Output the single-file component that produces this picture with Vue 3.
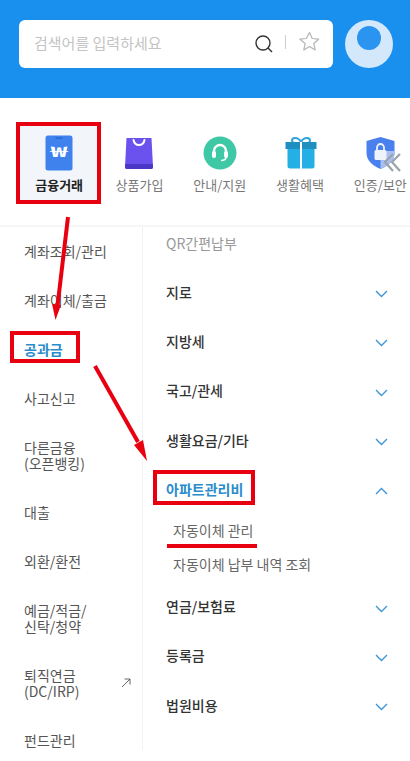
<script setup>
import { ref } from 'vue';

const categories = ref([
  { id: 'finance', label: '금융거래', active: true },
  { id: 'product', label: '상품가입' },
  { id: 'support', label: '안내/지원' },
  { id: 'benefit', label: '생활혜택' },
  { id: 'auth', label: '인증/보안' }
]);

const sideMenu = ref([
  { label: ['계좌조회/관리'] },
  { label: ['계좌이체/출금'] },
  { label: ['공과금'], active: true },
  { label: ['사고신고'] },
  { label: ['다른금융', '(오픈뱅킹)'] },
  { label: ['대출'] },
  { label: ['외환/환전'] },
  { label: ['예금/적금/', '신탁/청약'] },
  { label: ['퇴직연금', '(DC/IRP)'], external: true },
  { label: ['펀드관리'] }
]);

const subMenu = ref([
  { label: '지로' },
  { label: '지방세' },
  { label: '국고/관세' },
  { label: '생활요금/기타' },
  { label: '아파트관리비', open: true, children: ['자동이체 관리', '자동이체 납부 내역 조회'] },
  { label: '연금/보험료' },
  { label: '등록금' },
  { label: '법원비용' }
]);
</script>

<template>
  <div class="page">
    <header class="top">
      <div class="search">
        <span class="placeholder">검색어를 입력하세요</span>
        <svg class="search-icon" width="20" height="20" viewBox="0 0 20 20" fill="none">
          <circle cx="9" cy="9" r="7" stroke="#333" stroke-width="1.4" />
          <path d="M14 14l4 4" stroke="#333" stroke-width="1.4" />
        </svg>
        <span class="sep"></span>
        <svg class="star-icon" width="21" height="21" viewBox="0 0 21 21" fill="none">
          <path d="M10.5 1.5l2.7 6 6.4.7-4.8 4.3 1.4 6.4-5.7-3.3-5.7 3.3 1.4-6.4L.9 8.2l6.4-.7z" stroke="#b5b5b5" stroke-width="1.2" stroke-linejoin="round" />
        </svg>
      </div>
      <div class="avatar"><span class="avatar-dot"></span></div>
    </header>

    <nav class="categories">
      <div v-for="cat in categories" :key="cat.id" class="cat" :class="{ active: cat.active }">
        <div class="cat-icon">
          <svg v-if="cat.id === 'finance'" width="28" height="36" viewBox="0 0 28 36">
            <rect x="0.5" y="0.5" width="27" height="35" rx="2.5" fill="#3f82ee" />
            <rect x="10.5" y="2.5" width="7" height="1.2" fill="#2a62c4" />
            <text x="14" y="21.5" text-anchor="middle" class="won" textLength="17" lengthAdjust="spacingAndGlyphs">₩</text>
          </svg>
          <svg v-else-if="cat.id === 'product'" width="28" height="31" viewBox="0 0 28 31">
            <path d="M1.5 0h25L28 29q0 2-2 2H2q-2 0-2-2z" fill="#6b52ee" />
            <path d="M.2 26h27.6l.2 3q0 2-2 2H2q-2 0-2-2z" fill="#4c38c6" />
            <path d="M8.5 2q1 5 5.5 5t5.5-5" fill="none" stroke="#fff" stroke-width="2" stroke-linecap="round" />
          </svg>
          <svg v-else-if="cat.id === 'support'" width="34" height="34" viewBox="0 0 34 34">
            <circle cx="17" cy="17" r="16.5" fill="#3fc8a6" />
            <path d="M11 20v-5a6 6 0 0112 0v5" fill="none" stroke="#fff" stroke-width="2.4" />
            <rect x="9" y="15" width="4" height="7" rx="2" fill="#fff" />
            <rect x="21" y="15" width="4" height="7" rx="2" fill="#fff" />
            <path d="M23 21q0 3.5-5 3.5" fill="none" stroke="#fff" stroke-width="1.6" />
          </svg>
          <svg v-else-if="cat.id === 'benefit'" class="gift" width="32" height="32" viewBox="0 0 32 32">
            <path d="M16 5q-2-4-6-4-3 0-3 2.5T11 6M16 5q2-4 6-4 3 0 3 2.5T21 6" fill="none" stroke="#2fa4dc" stroke-width="2" />
            <rect x="0.5" y="5" width="31" height="7" fill="#1f8fc0" />
            <path d="M2.5 12h27v17q0 2.5-2.5 2.5H5q-2.5 0-2.5-2.5z" fill="#24b0e4" />
            <rect x="15" y="5" width="2" height="27" fill="#fff" />
          </svg>
          <svg v-else width="29" height="32" viewBox="0 0 29 32">
            <path d="M14.5 0L28.5 4v12q0 10-14 16Q.5 26 .5 16V4z" fill="#4a7fee" />
            <path d="M14.5 14h14v2q0 10-14 16z" fill="#a8bff2" />
            <rect x="8.5" y="13" width="12" height="10" rx="1.5" fill="#eef2fb" />
            <path d="M11 13v-2.5a3.5 3.5 0 017 0V13" fill="none" stroke="#eef2fb" stroke-width="1.8" />
          </svg>
        </div>
        <span class="cat-label">{{ cat.label }}</span>
      </div>
    </nav>

    <div class="menu">
      <ul class="side">
        <li v-for="item in sideMenu" :key="item.label[0]" class="side-item" :class="{ active: item.active }">
          <span class="side-text">
            <span v-for="line in item.label" :key="line" class="line">{{ line }}</span>
          </span>
          <svg v-if="item.external" class="ext" width="10" height="10" viewBox="0 0 10 10" fill="none">
            <path d="M1 9L9 1M3.5 1H9v5.5" stroke="#555" stroke-width="0.9" />
          </svg>
        </li>
      </ul>

      <div class="sub">
        <div class="sub-hint">QR간편납부</div>
        <div v-for="item in subMenu" :key="item.label" class="group">
          <div class="sub-row" :class="{ open: item.open }">
            <span>{{ item.label }}</span>
            <svg width="13" height="8" viewBox="0 0 13 8" fill="none" class="chev">
              <path d="M1 1l5.5 5.5L12 1" stroke="#3d96d8" stroke-width="1.4" />
            </svg>
          </div>
          <ul v-if="item.children" class="children">
            <li v-for="child in item.children" :key="child">{{ child }}</li>
          </ul>
        </div>
      </div>
    </div>

    <!-- 빨간 안내 표시 -->
    <svg class="marks" width="410" height="761" viewBox="0 0 410 761" fill="none">
      <path d="M393 154l-8 8 8 9M400 154l-8 8 8 9" stroke="#9aa2aa" stroke-width="2.2" />
      <rect x="18" y="124" width="81" height="78" stroke="#e90010" stroke-width="4" />
      <rect x="12" y="333" width="66" height="28" stroke="#e90010" stroke-width="4" />
      <rect x="155" y="472" width="98" height="31" stroke="#e90010" stroke-width="4" />
      <path d="M167 546h90" stroke="#e90010" stroke-width="4" />
      <path d="M68 217L57.5 306" stroke="#e90010" stroke-width="4" />
      <path d="M52 304l9 1-5.5 15z" fill="#e90010" />
      <path d="M95 366l43 76" stroke="#e90010" stroke-width="4" />
      <path d="M134 445l9-5 4 21z" fill="#e90010" />
    </svg>
  </div>
</template>

<style scoped>
.page {
  position: relative;
  width: 410px;
  height: 761px;
  overflow: hidden;
  background: #fff;
  font-family: "Noto Sans CJK KR", "Noto Sans", sans-serif;
}

.top {
  display: flex;
  gap: 12px;
  height: 98px;
  padding: 20px 17px 0 19px;
  box-sizing: border-box;
  background: #1a90ee;
}

.search {
  flex: 1;
  height: 48px;
  display: flex;
  align-items: center;
  padding: 0 13px 0 15px;
  background: #fff;
  border-radius: 6px;
}

.placeholder {
  flex: 1;
  padding-bottom: 4px;
  font-size: 15px;
  color: #c4c4c4;
}

.sep {
  width: 1px;
  height: 14px;
  margin: 0 13px 4px 11px;
  background: #ccc;
}

.star-icon {
  margin-bottom: 5px;
}

.avatar {
  width: 48px;
  height: 48px;
  display: flex;
  justify-content: center;
  padding-top: 6px;
  box-sizing: border-box;
  border-radius: 50%;
  background: #d3e8fb;
}

.avatar-dot {
  width: 24px;
  height: 24px;
  border-radius: 50%;
  background: #2a94f0;
}

.categories {
  display: flex;
  height: 129px;
  padding: 27px 0 0 19px;
  box-sizing: border-box;
  border-bottom: 2px solid #f5f6f8;
  overflow: hidden;
}

.cat {
  flex: 0 0 80.3px;
  height: 76px;
  display: flex;
  flex-direction: column;
  align-items: center;
}

.cat.active {
  background: #f2f5fa;
}

.cat-icon {
  height: 50px;
  display: flex;
  align-items: center;
  justify-content: center;
  padding-top: 6px;
  box-sizing: border-box;
}

.gift {
  margin-left: 1px;
}

.won {
  font-family: "Noto Sans CJK KR", sans-serif;
  font-size: 14px;
  font-weight: 700;
  fill: #fff;
}

.cat-label {
  margin-top: 1px;
  font-size: 13px;
  line-height: 18px;
  white-space: nowrap;
  color: #777;
}

.cat.active .cat-label {
  font-weight: 700;
  color: #222;
}

.menu {
  display: flex;
  height: 523px;
  overflow: hidden;
}

.side {
  flex: 0 0 142px;
  margin: -1px 0 0;
  padding: 0;
  list-style: none;
}

.side-item {
  display: flex;
  align-items: center;
  justify-content: space-between;
  padding: 16.5px 11px 16.5px 24px;
  font-size: 14px;
  line-height: 16px;
  color: #555;
}

.side-item.active {
  font-weight: 700;
  color: #2a8ccc;
}

.line {
  display: block;
}

.sub {
  flex: 1;
  padding-left: 23px;
  border-left: 1px solid #f0f1f3;
}

.sub-hint {
  height: 40px;
  font-size: 14px;
  line-height: 33px;
  color: #999;
}

.sub-row {
  display: flex;
  align-items: center;
  justify-content: space-between;
  height: 49.3px;
  padding-right: 22px;
  font-size: 14px;
  font-weight: 500;
  color: #333;
}

.sub-row.open {
  font-weight: 700;
  color: #2a8ccc;
}

.chev {
  margin-top: 5px;
}

.sub-row.open .chev {
  transform: rotate(180deg);
}

.children {
  height: 68px;
  margin: 0;
  padding: 0 0 0 7px;
  list-style: none;
  font-size: 14px;
  line-height: 34px;
  color: #666;
}

.marks {
  position: absolute;
  top: 0;
  left: 0;
  pointer-events: none;
}
</style>
